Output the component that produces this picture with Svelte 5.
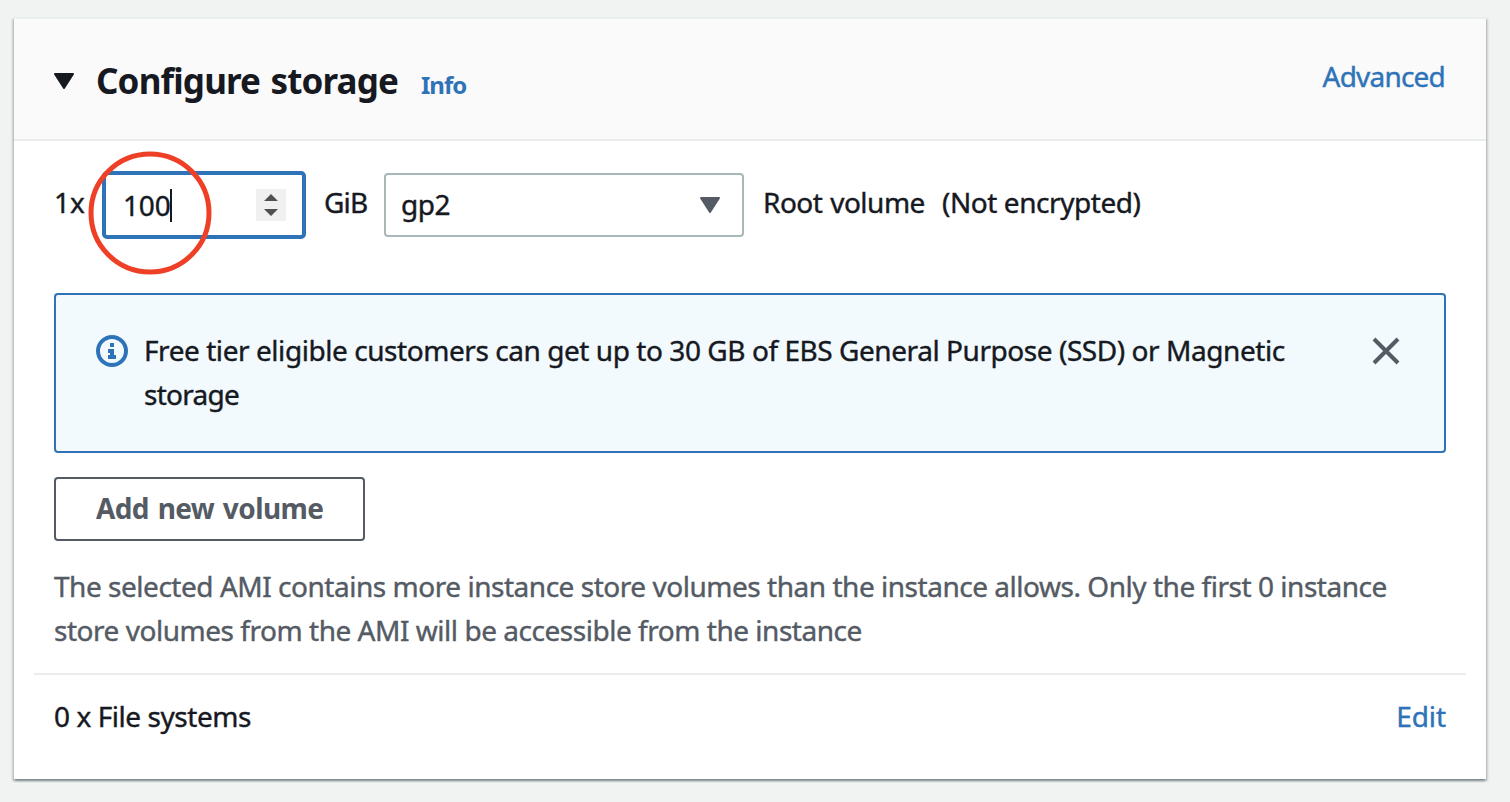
<script>
  let size = $state('100');
  const notice = [
    'Free tier eligible customers can get up to 30 GB of EBS General Purpose (SSD) or Magnetic',
    'storage'
  ];
  const hint = [
    'The selected AMI contains more instance store volumes than the instance allows. Only the first 0 instance',
    'store volumes from the AMI will be accessible from the instance'
  ];
</script>

<main>
  <section class="panel">
    <header>
      <svg class="caret" width="20" height="16" viewBox="0 0 20 16"><path d="M1 1h18L10 15z" fill="currentColor" stroke="currentColor" stroke-width="2" stroke-linejoin="round" /></svg>
      <h2>Configure storage</h2>
      <a class="info">Info</a>
      <a class="advanced">Advanced</a>
    </header>

    <div class="body">
      <div class="volume">
        <span class="count">1x</span>
        <div class="number">
          <span class="value">{size}</span><i class="cursor"></i>
          <span class="spinner">
            <svg width="30" height="32" viewBox="0 0 30 32"><path d="M8 12l7-7 7 7zM8 20h14l-7 7z" fill="#505050" /></svg>
          </span>
          <svg class="ring" width="124" height="124" viewBox="0 0 124 124"><circle cx="62" cy="62" r="59" fill="none" stroke="#ee4026" stroke-width="5" /></svg>
        </div>
        <span class="unit">GiB</span>
        <div class="select">
          <span>gp2</span>
          <svg width="20" height="16" viewBox="0 0 20 16"><path d="M1 1h18L10 15z" fill="currentColor" stroke="currentColor" stroke-width="2" stroke-linejoin="round" /></svg>
        </div>
        <span class="root">Root volume</span>
        <span class="enc">(Not encrypted)</span>
      </div>

      <div class="alert">
        <svg class="alert-icon" width="32" height="32" viewBox="0 0 32 32">
          <circle cx="16" cy="16" r="14" fill="none" stroke="#2e73b8" stroke-width="4" />
          <path d="M14 8h4v4h-4zM12 14h6v6h2v4h-8v-4h2v-2h-2z" fill="#2e73b8" />
        </svg>
        <p>{notice[0]}<br /><span class="wrapped">{notice[1]}</span></p>
        <svg class="close" width="28" height="28" viewBox="0 0 28 28"><path d="M2 2l24 24M26 2L2 26" stroke="#545b64" stroke-width="4" /></svg>
      </div>

      <button>Add new volume</button>

      <p class="hint">{hint[0]}<br />{hint[1]}</p>
    </div>

    <footer>
      <span>0 x File systems</span>
      <a class="edit">Edit</a>
    </footer>
  </section>
</main>

<style>
  :global(body) { margin: 0; background: #f1f3f3; }
  main {
    box-sizing: border-box;
    height: 802px;
    padding: 17px 24px 0 14px;
    overflow: hidden;
    font: 28px/44px "Noto Sans", sans-serif;
    letter-spacing: -0.44px;
    -webkit-text-stroke: 0.4px currentColor;
    color: #16191f;
    white-space: nowrap;
  }
  .panel {
    box-sizing: border-box;
    height: 762px;
    background: #fff;
    border-top: 2px solid #eaeded;
    box-shadow: 0 2px 2px 0 rgba(0, 28, 36, 0.3), 2px 2px 2px 0 rgba(0, 28, 36, 0.15), -2px 2px 2px 0 rgba(0, 28, 36, 0.15);
  }
  header {
    box-sizing: border-box;
    display: flex;
    height: 122px;
    padding: 0 41px 0 40px;
    background: #fafafa;
    border-bottom: 2px solid #eaeded;
  }
  a { color: #2e73b8; }
  .caret { margin: 54px 22px 0 0; }
  h2 { width: 302px; margin: 40px 23px 0 0; font-size: 35px; line-height: 44px; font-weight: 700; letter-spacing: -0.85px; word-spacing: 2px; -webkit-text-stroke: 0; }
  .info { margin-top: 44px; font-size: 24px; font-weight: 700; letter-spacing: -1px; -webkit-text-stroke: 0; }
  .advanced { margin: 35px 0 0 auto; letter-spacing: -0.8px; }
  .body { padding: 0 40px; }
  .volume { display: flex; height: 152px; }
  .count { width: 49px; margin-top: 39px; letter-spacing: 0; }
  .number {
    position: relative;
    box-sizing: border-box;
    display: flex;
    width: 204px;
    height: 68px;
    margin: 30px 18px 0 -1px;
    padding: 10px 16px 0 17px;
    border: 4px solid #2e73b8;
    border-radius: 5px;
  }
  .value { margin-top: -2px; letter-spacing: -0.2px; }
  .cursor { width: 2px; height: 33px; margin-top: 4px; background: #16191f; }
  .spinner { height: 32px; margin: 4px 0 0 auto; background: #f0f0f0; line-height: 0; }
  .ring { position: absolute; left: -18.5px; top: -24px; overflow: visible; }
  .unit { width: 60px; margin-top: 39px; letter-spacing: -0.8px; }
  .select {
    box-sizing: border-box;
    display: flex;
    justify-content: space-between;
    width: 360px;
    height: 64px;
    margin: 32px 19px 0 0;
    padding: 7px 22px 0 15px;
    border: 2px solid #aab7b8;
    border-radius: 4px;
    letter-spacing: -0.5px;
  }
  .select svg { margin-top: 15px; color: #545b64; }
  .root { width: 179px; margin-top: 39px; letter-spacing: -0.5px; word-spacing: 1px; }
  .enc { margin-top: 39px; }
  .alert {
    box-sizing: border-box;
    display: flex;
    height: 160px;
    padding: 33px 44px 0 40px;
    border: 2px solid #2e73b8;
    border-radius: 4px;
    background: #f2fafd;
  }
  .alert-icon { margin: 7px 16px 0 0; }
  .wrapped { letter-spacing: -0.75px; }
  p { margin: 0; }
  .close { margin: 9px 0 0 auto; }
  button {
    display: block;
    box-sizing: border-box;
    width: 311px;
    height: 64px;
    margin-top: 24px;
    padding: 0 0 2px 40px;
    text-align: left;
    background: #fff;
    border: 2px solid #545b64;
    border-radius: 4px;
    color: #545b64;
    font: 700 28px/44px "Noto Sans", sans-serif;
    letter-spacing: -0.6px;
    word-spacing: 2px;
    -webkit-text-stroke: 0;
  }
  .hint { height: 109px; margin-top: 23px; color: #545b64; letter-spacing: -0.47px; }
  .edit { margin-right: -1px; letter-spacing: -0.1px; }
  footer {
    display: flex;
    justify-content: space-between;
    margin: 0 20px;
    padding: 19px 21px 0 20px;
    border-top: 2px solid #eaeded;
  }
</style>
